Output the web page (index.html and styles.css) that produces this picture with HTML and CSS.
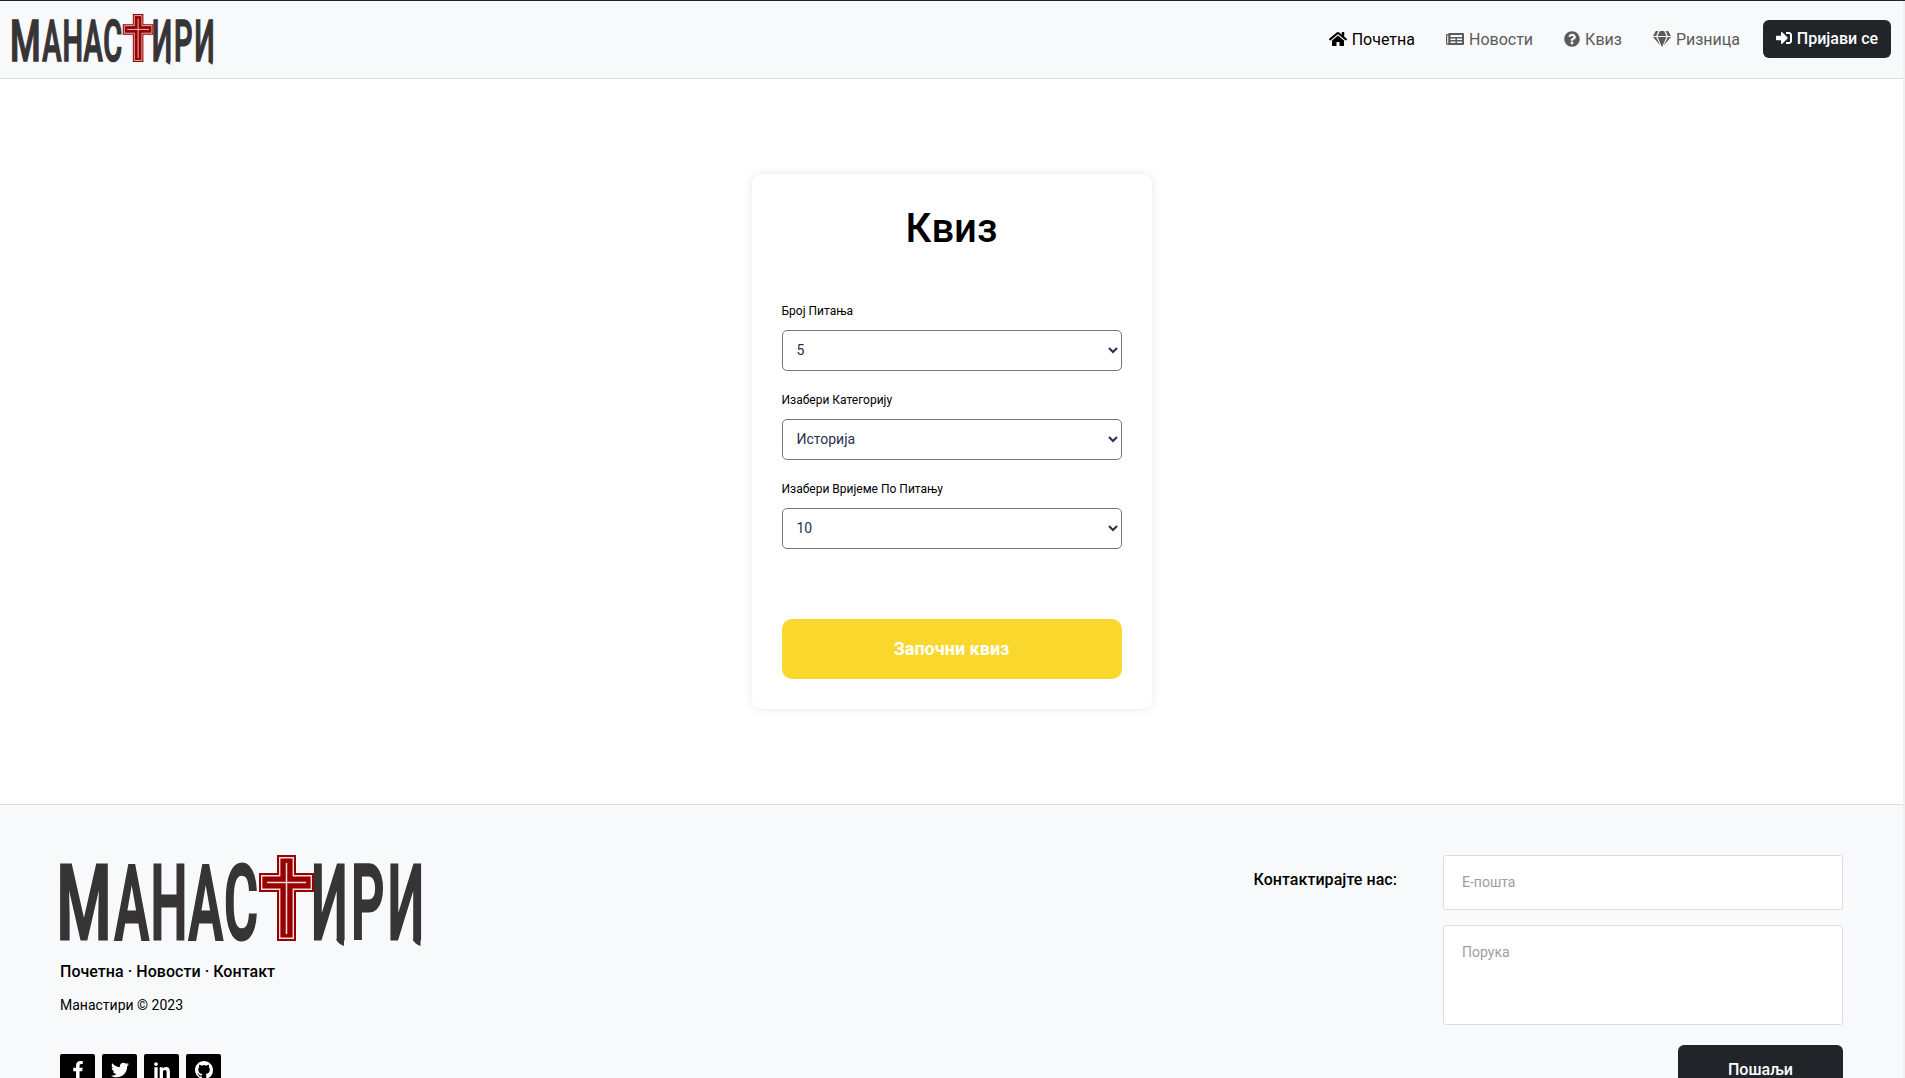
FILE: index.html
```html
<!DOCTYPE html>
<html lang="sr">
<head>
<meta charset="utf-8">
<title>Манастири - Квиз</title>
<link rel="stylesheet" href="styles.css">
</head>
<body>
<svg class="defs" aria-hidden="true">
  <symbol id="logo" viewBox="0 0 361 93" overflow="visible">
    <g class="logo-letters" transform="scale(.5 1)">
      <text y="84"><tspan x="-7" textLength="110" lengthAdjust="spacingAndGlyphs">М</tspan></text>
      <text y="84" x="109 181 257 328">АНАС</text>
      <text y="84" x="502 582 655">ИРИ</text>
    </g>
    <path fill="#373435" d="M276 84h8v7q-6-2-8-7zM352.500 84h8v7q-6-2-8-7z"/>
    <path fill="#900" d="M217 0h19v18h18v19h-18v49h-19V37h-18V18h18z"/>
    <path fill="none" stroke="#f3dede" stroke-width="1.4" d="M219.700 2.700h13.600v18h18v13.600h-18v49h-13.600v-49h-18V20.700h18z"/>
    <path stroke="#f3dede" stroke-width="1.5" d="M226.500 8v71M207 27.500h39"/>
  </symbol>
</svg>
<div class="page">
  <header class="header">
    <a class="brand"><svg class="brand-logo"><use href="#logo"/></svg></a>
    <nav class="nav">
      <a class="nav-link active"><svg class="icon wide" viewBox="0 0 576 512"><path d="M280 148 96 300v164a16 16 0 0 0 16 16l112-.3a16 16 0 0 0 16-16V368a16 16 0 0 1 16-16h64a16 16 0 0 1 16 16v95.600a16 16 0 0 0 16 16.100L464 480a16 16 0 0 0 16-16V300L296 148a12 12 0 0 0-16 0zM572 251l-84-69V44a12 12 0 0 0-12-12h-56a12 12 0 0 0-12 12v72l-90-74a48 48 0 0 0-61 0L4 251a12 12 0 0 0-1.600 17l25.500 31a12 12 0 0 0 17 1.600L280 107a12 12 0 0 1 16 0l235 194a12 12 0 0 0 17-1.600l25.500-31a12 12 0 0 0-1.500-17z"/></svg>Почетна</a>
      <a class="nav-link"><svg class="icon wide" viewBox="0 0 576 512"><path fill-rule="evenodd" d="M552 64H96c-13 0-24 10-24 24v8H24c-13.300 0-24 10.700-24 24v272c0 30.900 25.100 56 56 56h496c13.300 0 24-10.700 24-24V88c0-13.300-10.700-24-24-24zM40 136h32v256a16 16 0 0 1-32 0zM144 128h368v64H144zM144 240h160v48H144zM352 240h160v48H352zM144 336h160v48H144zM352 336h160v48H352z"/></svg>Новости</a>
      <a class="nav-link"><svg class="icon" viewBox="0 0 512 512"><path d="M504 256c0 137-111 248-248 248S8 393 8 256 119 8 256 8s248 111 248 248zM262.700 90c-54.500 0-89.300 23-116.500 63.800-3.500 5.300-2.400 12.400 2.700 16.300l34.700 26.300c5.200 3.900 12.600 3 16.700-2.100 17.900-22.700 30.100-35.800 57.300-35.800 20.400 0 45.700 13.100 45.700 33 0 15-12.400 22.700-32.500 34C247.100 238.500 216 254.900 216 296v4c0 6.600 5.400 12 12 12h56c6.600 0 12-5.400 12-12v-1.300c0-28.500 83.200-29.600 83.200-106.700 0-58-60.200-102-116.500-102zM256 338a46 46 0 1 0 0 92 46 46 0 0 0 0-92z"/></svg>Квиз</a>
      <a class="nav-link"><svg class="icon wide" viewBox="0 0 576 512"><path d="M485.500 0 576 160H474.900L405.700 0zm-128 0 69.200 160H149.300L218.500 0zm-267 0h79.800l-69.200 160H0zM0 192h100.700l123 251.700c1.500 3.100-2.700 5.900-5 3.300zm148.200 0h279.600l-137 318.200c-1 2.400-4.500 2.400-5.500 0zm204.100 251.700 123-251.700H576L357.300 446.900c-2.300 2.700-6.500-.1-5-3.200z"/></svg>Ризница</a>
      <a class="login"><svg class="icon" viewBox="0 0 512 512"><path d="M416 448h-84c-6.600 0-12-5.400-12-12v-40c0-6.600 5.400-12 12-12h84c17.700 0 32-14.300 32-32V160c0-17.700-14.300-32-32-32h-84c-6.600 0-12-5.400-12-12V76c0-6.600 5.400-12 12-12h84c53 0 96 43 96 96v192c0 53-43 96-96 96zm-47-209L201 71c-15-15-41-4.500-41 17v96H24c-13.300 0-24 10.700-24 24v96c0 13.300 10.700 24 24 24h136v96c0 21.500 26 32 41 17l168-168c9.300-9.400 9.300-24.600 0-34z"/></svg>Пријави се</a>
    </nav>
  </header>
  <main class="main">
    <form class="card">
      <h1 class="title">Квиз</h1>
      <label class="field">Број Питања<select class="select"><option>5</option></select></label>
      <label class="field">Изабери Категорију<select class="select"><option>Историја</option></select></label>
      <label class="field">Изабери Вријеме По Питању<select class="select"><option>10</option></select></label>
      <button class="start" type="button">Започни квиз</button>
    </form>
  </main>
  <footer class="footer">
    <div class="footer-left">
      <svg class="footer-logo"><use href="#logo"/></svg>
      <p class="links">Почетна · Новости · Контакт</p>
      <p class="copyright">Манастири © 2023</p>
      <div class="socials">
        <a class="social"><svg class="social-icon" viewBox="0 0 320 512"><path d="m279 288 14-93h-89v-60c0-25 12-50 52-50h41V7s-37-7-72-7c-73 0-121 44-121 125v70H23v93h81v224h100V288z"/></svg></a>
        <a class="social"><svg class="social-icon" viewBox="0 0 512 512"><path d="M459.400 151.700c.3 4.500.3 9.100.3 13.600 0 138.700-105.600 298.600-298.600 298.600-59.500 0-114.700-17.200-161.100-47.100 8.400 1 16.600 1.300 25.300 1.300 49.100 0 94.200-16.600 130.300-44.800-46.100-1-84.800-31.200-98.100-72.800 6.500 1 13 1.600 19.800 1.600 9.400 0 18.800-1.300 27.600-3.600-48.100-9.700-84.100-52-84.100-103v-1.300c14 7.800 30.200 12.700 47.400 13.300-28.300-18.800-46.800-51-46.800-87.400 0-19.500 5.200-37.400 14.300-53 51.700 63.700 129.300 105.300 216.400 109.800-1.600-7.800-2.600-15.900-2.600-24 0-57.800 46.800-104.900 104.900-104.900 30.200 0 57.500 12.700 76.700 33.100 23.700-4.500 46.500-13.300 66.600-25.300-7.800 24.400-24.400 44.800-46.100 57.800 21.100-2.300 41.600-8.100 60.400-16.200-14.300 20.800-32.200 39.300-52.600 54.300z"/></svg></a>
        <a class="social"><svg class="social-icon" viewBox="0 0 448 512"><path d="M100.300 480H7.400V180.900h92.900zM53.800 140.100C24.100 140.100 0 115.500 0 85.800a53.800 53.800 0 0 1 107.600 0c0 29.700-24.100 54.300-53.800 54.300zM447.900 480h-92.700V334.400c0-34.700-.7-79.200-48.300-79.200-48.300 0-55.700 37.700-55.700 76.700V480h-92.800V180.900h89.100v40.800h1.300c12.400-23.500 42.700-48.300 87.900-48.300 94 0 111.300 61.900 111.300 142.300V480z"/></svg></a>
        <a class="social"><svg class="social-icon" viewBox="0 0 16 16"><path d="M8 0C3.580 0 0 3.580 0 8c0 3.540 2.290 6.530 5.470 7.590.4.070.55-.17.55-.38 0-.19-.01-.82-.01-1.490-2.010.37-2.530-.49-2.690-.94-.09-.23-.48-.94-.82-1.130-.28-.15-.68-.52-.01-.53.63-.01 1.080.58 1.230.82.72 1.210 1.870.87 2.330.66.07-.52.28-.87.51-1.070-1.780-.2-3.640-.89-3.640-3.950 0-.87.31-1.590.82-2.150-.08-.2-.36-1.020.08-2.120 0 0 .67-.21 2.200.82.64-.18 1.320-.27 2-.27s1.360.09 2 .27c1.530-1.040 2.200-.82 2.200-.82.44 1.100.16 1.920.08 2.120.51.56.82 1.270.82 2.150 0 3.070-1.870 3.750-3.650 3.950.29.25.54.73.54 1.480 0 1.070-.01 1.930-.01 2.200 0 .21.15.46.55.38A8.010 8.010 0 0 0 16 8c0-4.420-3.580-8-8-8z"/></svg></a>
      </div>
    </div>
    <div class="contact">
      <p class="contact-title">Контактирајте нас:</p>
      <form class="contact-form">
        <input class="input" type="text" placeholder="Е-пошта">
        <textarea class="input message" placeholder="Порука"></textarea>
        <button class="send" type="button">Пошаљи</button>
      </form>
    </div>
  </footer>
</div>
</body>
</html>
```
FILE: styles.css
```css
* { box-sizing: border-box; }
body {
  margin: 0;
  height: 1078px;
  overflow: hidden;
  background: #f0f0f0;
  border-top: 1px solid #212529;
  font-family: Roboto, sans-serif;
  font-size: 16px;
  color: #000;
}
.defs { position: absolute; width: 0; height: 0; }
.page { width: 1903px; background: #fff; }

.logo-letters { font: 500 104px Roboto, sans-serif; fill: #373435; stroke: #373435; stroke-width: 3px; }

.header {
  height: 78px;
  display: flex;
  align-items: center;
  justify-content: space-between;
  padding: 0 12px;
  background: #f8f9fb;
  border-bottom: 1px solid #dcdfe1;
}
.brand-logo { display: block; width: 201px; height: 52px; overflow: visible; }
.nav { display: flex; align-items: center; }
.nav-link { margin-right: 31px; color: #5b5b5c; line-height: 24px; white-space: nowrap; }
.nav-link.active { color: #000; }
.nav-link:nth-child(4) { margin-right: 23px; }
.icon { width: 16px; height: 16px; fill: currentColor; vertical-align: -2px; margin-right: 5px; }
.icon.wide { width: 18px; }
.login {
  width: 128px;
  height: 38px;
  margin-bottom: 1px;
  border-radius: 6px;
  background: #212529;
  color: #fff;
  font-weight: 500;
  line-height: 37px;
  text-align: center;
  white-space: nowrap;
}

.main { height: 725px; padding-top: 95px; }
.card {
  width: 400px;
  height: 535px;
  margin: 0 auto;
  padding: 31px 30px 30px;
  border-radius: 10px;
  box-shadow: 0 0 10px rgba(0, 0, 0, .1);
}
.title { margin: 0 0 51px; font-size: 40px; font-weight: 500; line-height: 48px; text-align: center; }
.field { display: block; height: 89px; font-size: 12px; line-height: 14px; }
.select {
  display: block;
  width: 100%;
  height: 41px;
  margin-top: 12px;
  padding: 0 10px 1px;
  border: 1px solid #767676;
  border-radius: 5px;
  background: #fff;
  color: #26304d;
  font: 14px Roboto, sans-serif;
}
.start {
  display: block;
  width: 100%;
  height: 60px;
  margin-top: 48px;
  padding: 0 0 2px;
  border: 0;
  border-radius: 10px;
  background: #fad72c;
  color: #fff;
  font: 700 18px Roboto, sans-serif;
}

.footer {
  height: 274px;
  overflow: hidden;
  display: flex;
  justify-content: space-between;
  padding: 50px 60px 0;
  background: #f8f9fb;
  border-top: 1px solid #dcdddd;
}
.footer-logo { display: block; width: 361px; height: 93px; overflow: visible; }
.links { margin: 14px 0 0; font-weight: 500; line-height: 20px; letter-spacing: .04px; }
.copyright { margin: 14px 0 0; font-size: 14px; line-height: 18px; }
.socials { display: flex; gap: 7px; margin-top: 40px; }
.social {
  width: 35px;
  height: 35px;
  display: grid;
  place-items: center;
  border-radius: 2px;
  background: #000;
}
.social-icon { height: 18px; width: 18px; margin-bottom: 3px; fill: #fff; }
.contact { display: flex; }
.contact-title { margin: 15px 46px 0 0; font-weight: 500; line-height: 20px; letter-spacing: .05px; }
.contact-form { width: 400px; display: flex; flex-direction: column; align-items: flex-end; }
.input {
  flex: none;
  width: 400px;
  height: 55px;
  margin: 0 0 15px;
  padding: 17px 18px 18px;
  border: 1px solid #dcdcdc;
  border-radius: 3px;
  background: #fff;
  font: 14px Roboto, sans-serif;
}
.input::placeholder { color: #9e9e9e; }
.message { height: 100px; margin-bottom: 20px; padding-top: 18px; resize: none; }
.send {
  flex: none;
  width: 165px;
  height: 50px;
  padding: 0 0 2px;
  border: 0;
  border-radius: 6px;
  background: #212529;
  color: #fff;
  font: 500 16px Roboto, sans-serif;
}
```
